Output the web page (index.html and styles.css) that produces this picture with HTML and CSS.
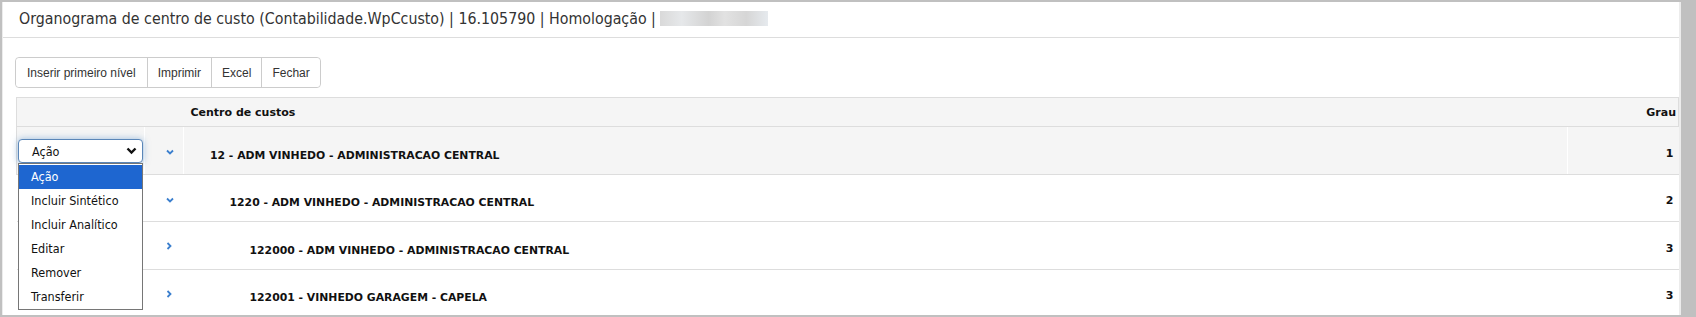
FILE: index.html
```html
<!DOCTYPE html>
<html lang="pt-BR">

<head>
    <meta charset="UTF-8">
    <meta name="viewport" content="width=device-width, initial-scale=1.0">
    <title>Organograma de centro de custo</title>
    <link rel="stylesheet" href="styles.css">
</head>

<body>
    <div class="frame">
        <div class="page-title">
            Organograma de centro de custo (Contabilidade.WpCcusto) | 16.105790 | Homologação |
            <span class="blurred"></span>
        </div>

        <div class="toolbar">
            <div class="btn-group">
                <button class="btn">Inserir primeiro nível</button>
                <button class="btn">Imprimir</button>
                <button class="btn">Excel</button>
                <button class="btn">Fechar</button>
            </div>
        </div>

        <table class="tree">
            <colgroup>
                <col class="col-action">
                <col class="col-toggle">
                <col>
                <col class="col-grau">
            </colgroup>
            <thead>
                <tr>
                    <th></th>
                    <th></th>
                    <th class="name">Centro de custos</th>
                    <th class="grau">Grau</th>
                </tr>
            </thead>
            <tbody>
                <tr class="active">
                    <td class="action">
                        <div class="select-wrap">
                            <div class="fake-select">
                                <span>Ação</span>
                                <svg width="11" height="8" viewBox="0 0 11 8"><polyline points="1.5,1.5 5.5,5.5 9.5,1.5" fill="none" stroke="#111" stroke-width="2.4"/></svg>
                            </div>
                            <ul class="select-menu">
                                <li class="selected">Ação</li>
                                <li>Incluir Sintético</li>
                                <li>Incluir Analítico</li>
                                <li>Editar</li>
                                <li>Remover</li>
                                <li>Transferir</li>
                            </ul>
                        </div>
                    </td>
                    <td class="toggle"><svg width="8" height="6" viewBox="0 0 8 6"><polyline points="1,1.5 4,4.5 7,1.5" fill="none" stroke="#3b7fce" stroke-width="1.8"/></svg></td>
                    <td class="name lvl-1">12 - ADM VINHEDO - ADMINISTRACAO CENTRAL</td>
                    <td class="grau">1</td>
                </tr>
                <tr>
                    <td class="action"></td>
                    <td class="toggle"><svg width="8" height="6" viewBox="0 0 8 6"><polyline points="1,1.5 4,4.5 7,1.5" fill="none" stroke="#3b7fce" stroke-width="1.8"/></svg></td>
                    <td class="name lvl-2">1220 - ADM VINHEDO - ADMINISTRACAO CENTRAL</td>
                    <td class="grau">2</td>
                </tr>
                <tr>
                    <td class="action"></td>
                    <td class="toggle"><svg width="6" height="8" viewBox="0 0 6 8"><polyline points="1.5,1 4.5,4 1.5,7" fill="none" stroke="#3b7fce" stroke-width="1.8"/></svg></td>
                    <td class="name lvl-3">122000 - ADM VINHEDO - ADMINISTRACAO CENTRAL</td>
                    <td class="grau">3</td>
                </tr>
                <tr>
                    <td class="action"></td>
                    <td class="toggle"><svg width="6" height="8" viewBox="0 0 6 8"><polyline points="1.5,1 4.5,4 1.5,7" fill="none" stroke="#3b7fce" stroke-width="1.8"/></svg></td>
                    <td class="name lvl-3">122001 - VINHEDO GARAGEM - CAPELA</td>
                    <td class="grau">3</td>
                </tr>
            </tbody>
        </table>
    </div>
</body>

</html>
```

FILE: styles.css
```css
body {
    margin: 0;
    background: #c0c0c0;
    font-family: "DejaVu Sans Condensed", "DejaVu Sans", sans-serif;
    font-stretch: condensed;
}

.frame {
    margin: 2px 15px 0 2px;
    height: 313px;
    background: #fff;
    border-left: 1px solid #ececec;
    border-right: 2px solid #ececec;
    overflow: hidden;
}

.page-title {
    height: 35px;
    line-height: 34px;
    padding-left: 16px;
    font-size: 15.8px;
    color: #333;
    border-bottom: 1px solid #ddd;
}

.blurred {
    display: inline-block;
    width: 108px;
    height: 15px;
    vertical-align: -2px;
    background: linear-gradient(90deg, #d9d9d9, #e6e8ea 20%, #d3d3d3 45%, #e2e2e2 60%, #d6d6d6 80%, #e6eaee);
}

.toolbar {
    padding: 19px 0 0 12px;
}

.btn-group {
    display: inline-flex;
    border: 1px solid #ccc;
    border-radius: 4px;
}

.btn {
    height: 29px;
    padding: 0 10px;
    border: none;
    border-left: 1px solid #ccc;
    background: #fff;
    font-family: "Liberation Sans", Arial, sans-serif;
    font-size: 12px;
    color: #333;
}

.btn:first-child {
    padding: 0 11px;
    border-left: none;
    border-radius: 4px 0 0 4px;
}

.btn:last-child {
    border-radius: 0 4px 4px 0;
}

.tree {
    margin: 9px 0 0 13px;
    width: 1663px;
    border-collapse: collapse;
    table-layout: fixed;
    font-family: "DejaVu Sans", Verdana, sans-serif;
    font-stretch: normal;
    font-size: 11px;
    color: #111;
}

.col-action {
    width: 128px;
}

.col-toggle {
    width: 39px;
}

.col-grau {
    width: 111px;
}

.tree th {
    height: 28px;
    padding: 0;
    background: #f5f5f5;
    border-top: 1px solid #ddd;
    border-bottom: 1px solid #ddd;
    font-weight: bold;
    text-align: left;
}

.tree th:first-child {
    border-left: 1px solid #ddd;
}

.tree th:last-child {
    border-right: 1px solid #ddd;
}

.tree th.name {
    padding-left: 7px;
}

.tree th.grau {
    text-align: right;
    padding-right: 2px;
}

.tree tbody tr {
    height: 47.5px;
}

.tree td {
    padding: 0;
    border-bottom: 1px solid #ddd;
    vertical-align: middle;
    font-weight: bold;
}

.tree tr.active td {
    background: #f5f5f5;
    border-left: 1px solid #fff;
}

.tree tr.active td:first-child {
    border-left: 1px solid #ddd;
}

.tree td.action {
    vertical-align: top;
    padding: 12px 0 0 1px;
}

.tree td.toggle {
    padding: 3px 0 0 21px;
}

.tree td.name {
    padding-top: 10px;
    font-size: 10.85px;
}

.tree td.lvl-1 {
    padding-left: 26px;
}

.tree td.lvl-2 {
    padding-left: 46px;
}

.tree td.lvl-3 {
    padding-left: 66px;
}

.tree td.grau {
    text-align: right;
    padding: 6px 5px 0 0;
}

.select-wrap {
    position: relative;
    width: 125px;
}

.fake-select {
    display: flex;
    align-items: center;
    justify-content: space-between;
    height: 22px;
    padding: 0 5px 0 13px;
    border: 1px solid #5a86b8;
    border-radius: 4px;
    background: #fff;
    box-shadow: 0 0 7px rgba(80, 140, 200, 0.55);
    font-family: "DejaVu Sans Condensed", "DejaVu Sans", sans-serif;
    font-stretch: condensed;
    font-size: 12.5px;
    font-weight: normal;
    color: #111;
}

.select-menu {
    position: absolute;
    left: 0;
    top: 24px;
    width: 123px;
    margin: 0;
    padding: 1px 0 0;
    list-style: none;
    background: #fff;
    border: 1px solid #767676;
    z-index: 2;
}

.select-menu li {
    height: 24px;
    line-height: 24px;
    padding-left: 12px;
    font-family: "DejaVu Sans Condensed", "DejaVu Sans", sans-serif;
    font-stretch: condensed;
    font-size: 12.5px;
    font-weight: normal;
    color: #111;
}

.select-menu li.selected {
    background: #1e66d0;
    color: #fff;
}
```
